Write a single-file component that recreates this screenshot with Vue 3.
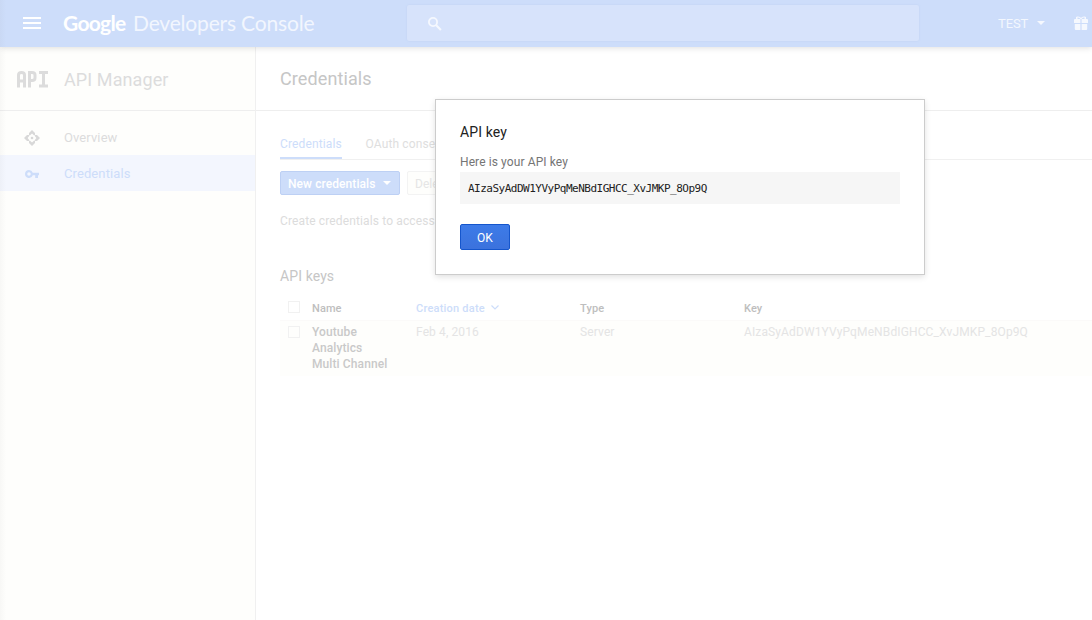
<script setup>
const columns = ['Name', 'Creation date', 'Type', 'Key']
const apiKey = 'AIzaSyAdDW1YVyPqMeNBdIGHCC_XvJMKP_8Op9Q'
</script>

<template>
  <div class="console">
    <header class="topbar">
      <svg class="menu" width="18" height="12" viewBox="0 0 18 12"><path d="M0 1h18M0 6h18M0 11h18" stroke="#fff" stroke-width="2" /></svg>
      <div class="brand"><span class="google">Google</span><span class="product">Developers Console</span></div>
      <div class="search">
        <svg width="14" height="14" viewBox="0 0 14 14" fill="none" stroke="#f5f8fe"><circle cx="5" cy="5" r="4.1" stroke-width="1.8" /><path d="M8.2 8.2l4.7 4.7" stroke-width="2.1" /></svg>
      </div>
      <div class="project">TEST</div>
      <svg class="project-caret" width="8" height="4" viewBox="0 0 8 4"><path d="M0 0h8L4 4z" fill="#f5f8fe" /></svg>
      <svg class="gift" width="14" height="14" viewBox="0 0 14 14" fill="#f5f8fe"><path d="M0 4.2Q0 3 1 3h5.400v4H0zM7.600 3H13q1 0 1 1.200V7H7.600zM.8 8h5.600v6H1.800q-1 0-1-1zM7.600 8h5.600v5q0 1-1 1H7.600z" /><path d="M2 3V1Q3.600-.5 7 1.800 10.400-.5 12 1v2h-1.500V1.600Q9 1.400 7.500 3h-1Q5 1.400 3.500 1.600V3z" /></svg>
    </header>

    <div class="body">
      <aside class="sidebar">
        <div class="manager">
          <svg width="32" height="17" viewBox="0 0 32 17" fill="none" stroke="#dcdcdc" stroke-width="3"><path d="M1.500 16.500V4q0-2.500 3-2.500t3 2.500v12.500M1.500 10h6" /><path d="M12.500 16.500v-15h2.500q3 0 3 2.500v3q0 2.500-3 2.500h-2.500" /><path d="M22 1.500h9M22 15h9M26.500 1.500V15" /></svg>
          <span>API Manager</span>
        </div>
        <nav>
          <a class="nav-item">
            <svg width="16" height="16" viewBox="0 0 16 16" fill="#d8d8d8"><path d="M8 0l3 3v2.200H9.900L8 3.600 6.100 5.200H5V3zM8 16l3-3v-2.200H9.900L8 12.400l-1.900-1.600H5V13zM0 8l3-3h2.200v1.100L3.600 8l1.600 1.900V11H3zM16 8l-3-3h-2.200v1.100L12.400 8l-1.600 1.900V11H13z" /><circle cx="8" cy="8" r="1.300" /></svg>
            <span>Overview</span>
          </a>
          <a class="nav-item active">
            <svg width="16" height="10" viewBox="0 0 16 10"><path fill="#cdddfa" fill-rule="evenodd" d="M5 1a4 4 0 0 1 3.800 2.700H15v2.600h-1V9h-2.800V6.300H8.800A4 4 0 1 1 5 1zm0 2.200a1.800 1.800 0 1 0 0 3.600 1.800 1.800 0 0 0 0-3.600z" /></svg>
            <span>Credentials</span>
          </a>
        </nav>
      </aside>

      <main>
        <h1>Credentials</h1>
        <div class="content">
          <div class="tabs"><span class="tab selected">Credentials</span><span class="tab">OAuth conse</span></div>
          <div class="actions">
            <button class="new"><span>New credentials</span><svg width="8" height="4" viewBox="0 0 8 4"><path d="M0 0h8L4 4z" fill="#fff" /></svg></button>
            <button class="delete">Dele</button>
          </div>
          <p class="hint">Create credentials to access</p>
          <h2>API keys</h2>
          <div class="table">
            <div class="row heading">
              <i class="check"></i>
              <span v-for="name in columns" :key="name" :class="{ sorted: name === 'Creation date' }">{{ name }}<svg v-if="name === 'Creation date'" width="8" height="5" viewBox="0 0 8 5"><path d="M.5.5L4 4 7.500.5" fill="none" stroke="#cdddfa" stroke-width="1.200" /></svg></span>
            </div>
            <div class="row entry">
              <i class="check"></i>
              <b>Youtube<br />Analytics<br />Multi Channel</b>
              <span>Feb 4, 2016</span><span>Server</span><span class="value">{{ apiKey }}</span>
            </div>
          </div>
        </div>
      </main>
    </div>

    <div class="edge"></div>
    <section class="dialog">
      <h3>API key</h3>
      <p>Here is your API key</p>
      <div class="key"><span>{{ apiKey }}</span></div>
      <button class="ok">OK</button>
    </section>
  </div>
</template>

<style>
body { margin: 0; overflow: hidden; }
</style>

<style scoped>
* { box-sizing: border-box; }
h1, h2, h3, p { margin: 0; font-weight: 400; }
svg { display: block; flex: none; }
button { font-family: inherit; padding: 0; margin: 0; }
.console { position: relative; width: 1092px; height: 620px; overflow: hidden; display: flex; flex-direction: column; background: #fff; font: 13px/16px Roboto, sans-serif; color: #dedede; }
.topbar { position: relative; z-index: 1; flex: none; height: 47px; display: flex; align-items: center; background: #cdddfa; box-shadow: 0 1px 6px rgba(0, 0, 0, .13); white-space: nowrap; }
.menu { margin-left: 23px; margin-top: -1px; }
.brand { width: 343px; padding-left: 22px; margin-top: -1px; font: 21px/30px Lato, sans-serif; display: flex; gap: 7px; }
.google { color: #fff; font-weight: 700; width: 63px; letter-spacing: -.7px; }
.product { color: #f2f6fe; letter-spacing: -.18px; }
.search { margin-left: 23px; width: 512px; height: 36px; margin-top: -1px; display: flex; align-items: center; padding-left: 21px; background: #d7e3fb; border-radius: 2px; box-shadow: 0 0 2px #becff0; }
.search svg { margin-top: 2px; }
.project { margin-left: 79px; width: 31px; color: #f3f7fe; letter-spacing: -.1px; }
.project-caret { margin-left: 8px; margin-top: -1px; }
.gift { margin-left: 29px; margin-top: -1px; }
.body { flex: 1; display: flex; min-height: 0; }
.sidebar { width: 256px; flex: none; background: #fefefc; border-right: 1px solid #f0f0f0; }
.manager { height: 64px; border-bottom: 1px solid #eee; display: flex; align-items: center; padding-left: 17px; gap: 15px; font-size: 18px; line-height: 24px; color: #dcdcdc; letter-spacing: .1px; }
.manager span { margin-top: 3px; }
.manager svg { margin-top: 1px; }
nav { padding-top: 8px; }
.nav-item { display: flex; align-items: center; height: 36px; padding-left: 24px; gap: 24px; color: #dcdcdc; letter-spacing: .1px; }
.nav-item svg { margin-top: 2px; }
.nav-item span { margin-top: 2px; }
.active { background: #f3f6fe; color: #cdddfa; }
main { width: 836px; }
h1 { height: 64px; padding: 20px 24px; border-bottom: 1px solid #eee; font-size: 18px; line-height: 24px; color: #c6c6c6; letter-spacing: .1px; }
.content { padding: 18px 0 0 24px; }
.tabs { height: 31px; border-bottom: 1px solid #f0f0f0; display: flex; gap: 23.5px; font-size: 12px; }
.tab { height: 30px; padding-top: 7px; letter-spacing: .14px; }
.selected { width: 62px; color: #cdddfa; border-bottom: 2px solid #cdddfa; }
.actions { display: flex; gap: 7px; margin-top: 11px; }
.actions button { height: 24px; border-radius: 2px; font-size: 12px; line-height: 24px; }
.new { width: 120px; display: flex; align-items: center; justify-content: space-between; background: #cdddfa; border: 1px solid #bdd0f4; color: #fff; font-weight: 500; }
.new span { margin-top: 2px; }
.actions .new { padding: 0 8px 0 7px; letter-spacing: .08px; }
.actions .delete { width: 60px; padding-left: 7px; text-align: left; background: #fefefc; border: 1px solid #f3f3f3; color: #e5e5e5; }
.hint { margin-top: 18px; font-size: 12px; letter-spacing: .13px; color: #dcdcdc; }
h2 { margin-top: 39px; font-size: 14px; line-height: 16px; color: #c6c6c6; letter-spacing: .1px; }
.table { margin-top: 15px; }
.row { display: grid; grid-template-columns: 32px 104px 164px 164px 348px; }
.heading { height: 21px; font-size: 11px; line-height: 16px; font-weight: 500; color: #bebebe; }
.heading span { display: flex; gap: 6px; align-items: center; height: 20px; letter-spacing: .1px; }
.heading .sorted { color: #cdddfa; letter-spacing: .22px; }
.heading .sorted svg { margin-top: -3px; }
.heading .check { margin-top: 2px; }
.check { width: 12px; height: 12px; margin-left: 8px; border: 1px solid #f1f1f1; }
.entry { height: 56px; padding-top: 3px; border-top: 1px solid #fbfaf9; background: #fefefc; font-size: 12px; color: #e4e4e4; }
.entry .check { margin-top: 2px; }
.entry span { letter-spacing: .12px; }
.entry b { font-weight: 500; color: #c9c9c9; white-space: nowrap; letter-spacing: .1px; }
.edge { position: absolute; z-index: 2; inset: 0 auto 0 0; width: 6px; background: linear-gradient(90deg, rgba(130, 130, 130, .05), transparent); }
.dialog { position: absolute; z-index: 3; left: 435px; top: 99px; width: 490px; height: 176px; padding: 24px; background: #fff; border: 1px solid #ccc; box-shadow: 0 2px 6px rgba(0, 0, 0, .12); }
h3 { font-size: 14px; line-height: 16px; color: #212121; letter-spacing: .1px; }
.dialog p { margin-top: 14px; font-size: 12px; line-height: 16px; color: #757575; letter-spacing: .1px; }
.key { margin-top: 2px; height: 32px; padding: 0 8px; background: #f6f6f6; color: #212121; font: 11px/33px "DejaVu Sans Mono", monospace; letter-spacing: -.5px; white-space: nowrap; }
.ok { display: block; margin-top: 20px; width: 50px; height: 26px; background: linear-gradient(#3d7be8, #3b72dd); border: 1px solid #1556cc; border-radius: 2px; color: #fff; font-size: 12px; line-height: 24px; padding-top: 1px; }
</style>
